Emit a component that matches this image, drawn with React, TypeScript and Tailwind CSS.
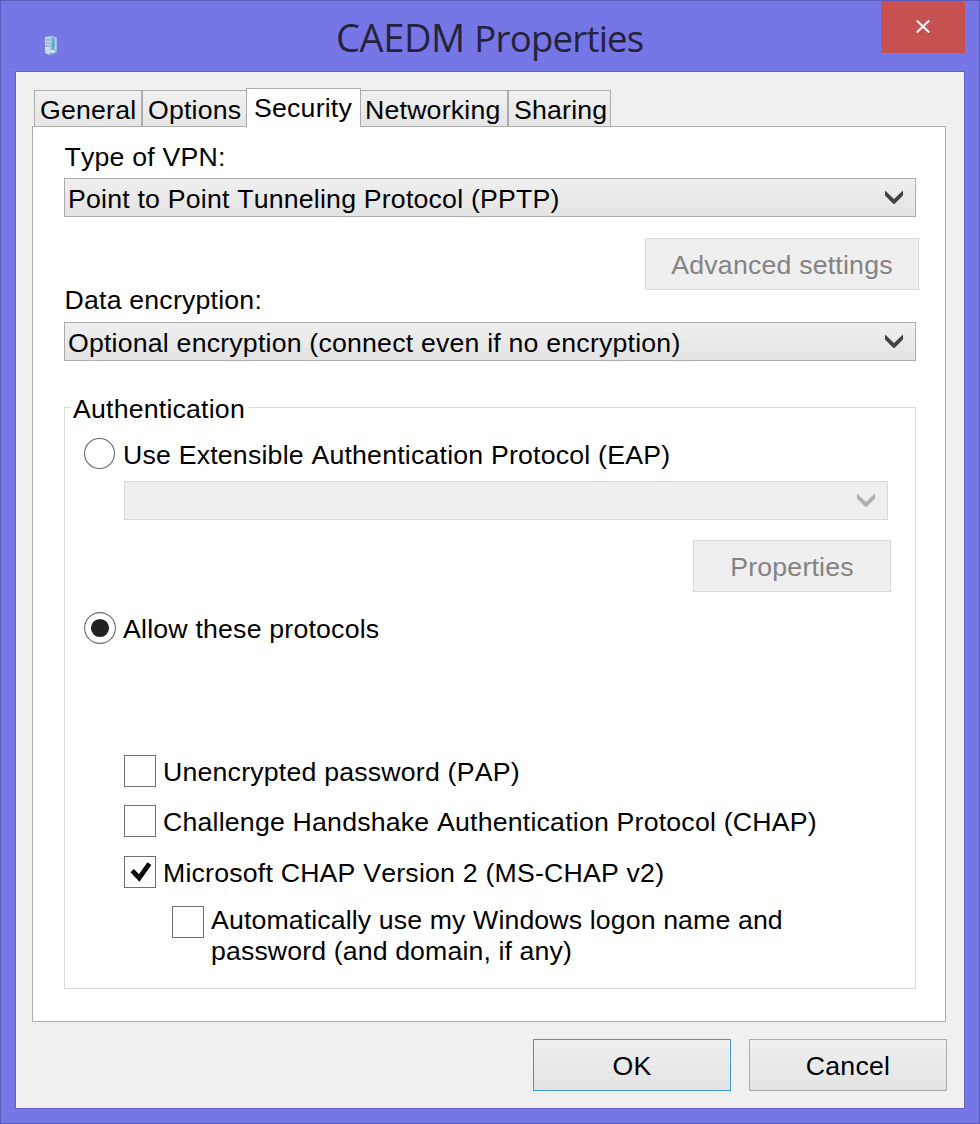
import type { ReactNode } from "react";

function Chevron({ color }: { color: string }) {
  return (
    <svg width="18" height="13" viewBox="0 0 18 13" className="shrink-0">
      <path d="M0 0 H0.6 L9 8 L17.4 0 H18 V4.4 L9.6 13 H8.4 L0 4.4 Z" fill={color} />
    </svg>
  );
}

function Select({ value, disabled = false }: { value?: string; disabled?: boolean }) {
  return (
    <div
      className={
        disabled
          ? "flex h-[39px] items-start justify-between border border-[#d9d9d9] bg-[#efefef] pr-3 pl-[3px]"
          : "flex h-[39px] items-start justify-between border border-[#acacac] bg-linear-to-b from-[#f0f0f0] to-[#e3e3e3] pr-3 pl-[3px]"
      }
    >
      <span className="mt-[5px] whitespace-nowrap">{value}</span>
      <span className="mt-3 flex">
        <Chevron color={disabled ? "#b0b0b0" : "#444444"} />
      </span>
    </div>
  );
}

function Button({ children, className }: { children: ReactNode; className: string }) {
  return (
    <button className={`flex h-[52px] items-start justify-center border pt-[11px] ${className}`}>
      {children}
    </button>
  );
}

function Radio({ checked = false, label, className }: { checked?: boolean; label: string; className: string }) {
  return (
    <div className={`flex items-start ${className}`}>
      <svg width="32" height="32" viewBox="0 0 32 32" className="shrink-0">
        {checked ? (
          <>
            <circle cx="16" cy="16" r="15.4" fill="#fff" stroke="#6b6b6b" strokeWidth="1.1" />
            <circle cx="16" cy="16" r="9.1" fill="#212121" />
          </>
        ) : (
          <circle cx="15.5" cy="15.5" r="15" fill="#fff" stroke="#6b6b6b" strokeWidth="1.1" />
        )}
      </svg>
      <span className="mt-[2px] ml-[7px]">{label}</span>
    </div>
  );
}

function Checkbox({ checked = false, children, className }: { checked?: boolean; children: ReactNode; className: string }) {
  return (
    <div className={`flex items-start ${className}`}>
      <span className="mr-[7px] block size-8 shrink-0 border border-[#707070] bg-white">
        {checked && (
          <svg width="30" height="30" viewBox="0 0 30 30">
            <path d="M7.2 13.6 L14.2 21 L24.4 6.6" fill="none" stroke="#0a0a0a" strokeWidth="4.8" />
          </svg>
        )}
      </span>
      {children}
    </div>
  );
}

const tab = "border border-[#acacac] bg-linear-to-b from-[#f0f0f0] to-[#e6e6e6] h-[37px] pt-1";

function ServerIcon() {
  return (
    <svg width="14" height="21" viewBox="0 0 14 21">
      <path d="M1 2 L7 1 L12.5 2 V17 L7 20 L1 18 Z" fill="#a9cde6" />
      <path d="M1 2 L6.5 2.5 V20 L1 18 Z" fill="#c6dbef" />
      <path d="M6.5 2.5 L12.5 2 V17 L6.5 20 Z" fill="#8fbfda" />
      <path d="M8 3 H10.5 V15 L8 16.5 Z" fill="#69a3ca" />
      <path d="M11 3 H12.3 V15.5 H11 Z" fill="#b2d3e8" />
      <path d="M1.5 5 H6 M1.5 8 H6 M1.5 11 H6" stroke="#6d91c1" strokeWidth="1" />
      <path d="M5 17 L9 14.5 L11 16.5 L7 19.5 Z" fill="#d8ece9" />
      <path d="M5.5 19.2 L8.5 18" stroke="#59718d" strokeWidth="1" />
    </svg>
  );
}

export default function App() {
  return (
    <div className="flex h-[1124px] w-[980px] flex-col border border-[#5c5bbc] bg-[#7776e6] font-['Liberation_Sans',Arial,sans-serif] text-[26.7px] leading-[30px] tracking-[0.2px] text-black [font-kerning:none]">
      <header className="flex h-[70px] shrink-0 items-start">
        <div className="mt-[34px] ml-[43px] w-[14px]">
          <ServerIcon />
        </div>
        <h1 className="mt-[10px] w-[823px] pl-[278px] font-['Open_Sans','Noto_Sans',sans-serif] text-[38px] leading-[52px] font-normal tracking-[-0.4px] whitespace-nowrap text-[#23233b]">
          CAEDM <span className="text-[36.5px] tracking-[-0.75px]">Properties</span>
        </h1>
        <button className="flex h-[52px] w-[84px] items-start justify-center bg-[#c75050] pt-[19px]">
          <svg width="14" height="13" viewBox="0 0 14 13">
            <path d="M0.8 0.5 L13.2 12.5 M13.2 0.5 L0.8 12.5" stroke="#fff" strokeWidth="2" />
          </svg>
        </button>
      </header>

      <main className="mx-[14px] h-[1038px] border border-[#6461c6] bg-[#f0f0f0] px-4 pt-4">
        <nav className="ml-[2px] flex h-[38px] items-end">
          <div className={`${tab} -mb-px w-[108px] pl-[5px]`}>General</div>
          <div className={`${tab} -mb-px w-[105px] pl-[5px]`}>Options</div>
          <div className="z-10 -mb-px -ml-px h-[39px] w-[115px] border border-b-0 border-[#acacac] bg-white pt-1 pl-[7px]">Security</div>
          <div className={`${tab} -mb-px -ml-px w-[148px] pl-1`}>Networking</div>
          <div className={`${tab} -mb-px w-[103px] pl-[5px]`}>Sharing</div>
        </nav>

        <section className="h-[896px] w-[914px] border border-[#acacac] bg-white pr-[29px] pl-[31px]">
          <p className="mt-[15px] pl-[0.5px]">Type of VPN:</p>
          <div className="mt-[6px]">
            <Select value="Point to Point Tunneling Protocol (PPTP)" />
          </div>
          <Button className="mt-[21px] -mr-[3px] ml-auto w-[274px] border-[#d9d9d9] bg-[#efefef] text-[#838383]">
            Advanced settings
          </Button>
          <p className="-mt-[5px] pl-[0.5px]">Data encryption:</p>
          <div className="mt-[7px]">
            <Select value="Optional encryption (connect even if no encryption)" />
          </div>

          <div className="mt-[46px] h-[582px] border border-[#dcdcdc] pl-[19px]">
            <h2 className="-mt-[14px] -ml-[13px] w-[177px] bg-white pl-[2px]">Authentication</h2>
            <Radio className="mt-[14px]" label="Use Extensible Authentication Protocol (EAP)" />
            <div className="mt-[11px] ml-10 w-[764px]">
              <Select disabled />
            </div>
            <Button className="mt-5 mr-6 ml-auto w-[198px] border-[#d9d9d9] bg-[#efefef] text-[#838383]">
              Properties
            </Button>
            <Radio checked className="mt-5" label="Allow these protocols" />
            <Checkbox className="mt-[111px] ml-10">
              <span className="mt-[2px]">Unencrypted password (PAP)</span>
            </Checkbox>
            <Checkbox className="mt-[18px] ml-10">
              <span className="mt-[2px]">Challenge Handshake Authentication Protocol (CHAP)</span>
            </Checkbox>
            <Checkbox checked className="mt-[19px] ml-10">
              <span className="mt-[2px]">Microsoft CHAP Version 2 (MS-CHAP v2)</span>
            </Checkbox>
            <Checkbox className="mt-[18px] ml-[88px]">
              <span className="-mt-[1px] leading-[31px] tracking-[0.12px]">
                Automatically use my Windows logon name and
                <br />
                password (and domain, if any)
              </span>
            </Checkbox>
          </div>
        </section>

        <footer className="mt-[17px] flex gap-[18px] pl-[501px]">
          <Button className="w-[198px] shrink-0 border-[#4496d2] bg-linear-to-b from-[#f0f0f0] to-[#e3e3e3]">OK</Button>
          <Button className="w-[198px] shrink-0 border-[#acacac] bg-linear-to-b from-[#f0f0f0] to-[#e3e3e3]">Cancel</Button>
        </footer>
      </main>
    </div>
  );
}
